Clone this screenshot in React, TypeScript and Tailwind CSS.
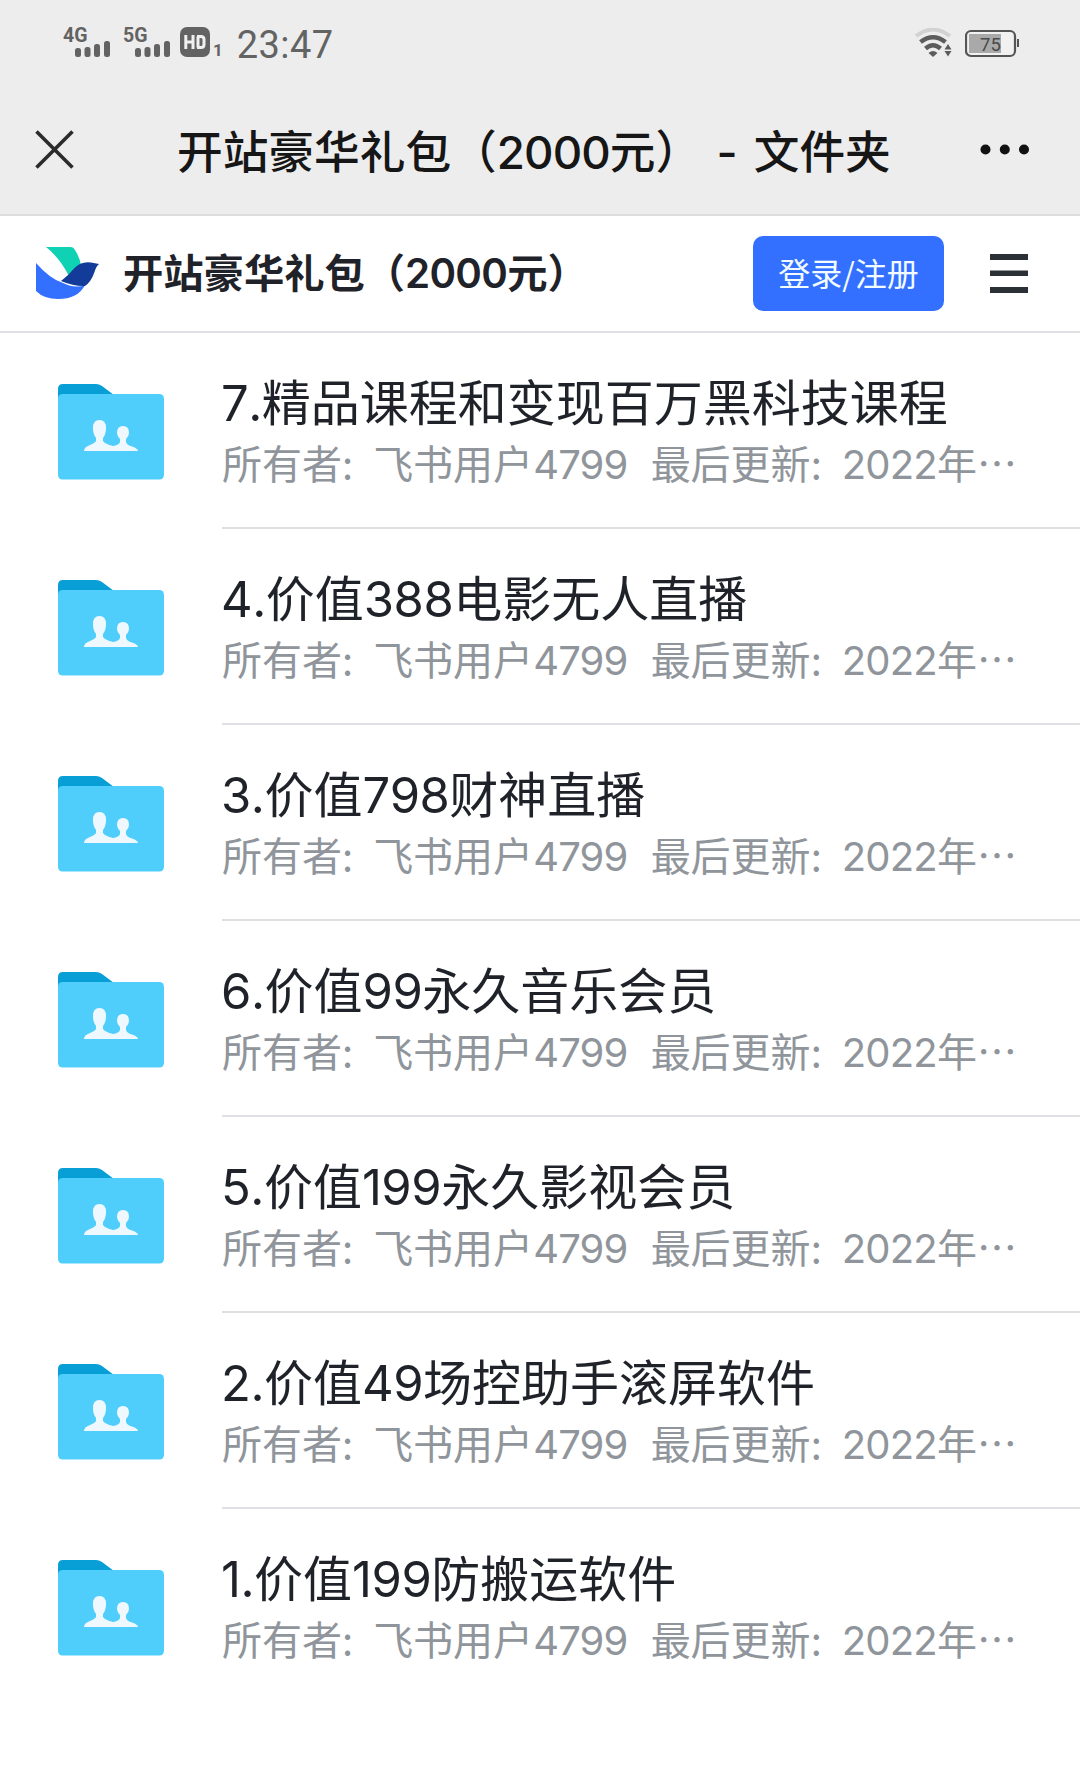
import { Fragment } from "react";

const FOLDERS: string[] = [
  "7.精品课程和变现百万黑科技课程",
  "4.价值388电影无人直播",
  "3.价值798财神直播",
  "6.价值99永久音乐会员",
  "5.价值199永久影视会员",
  "2.价值49场控助手滚屏软件",
  "1.价值199防搬运软件",
];

// digits use Inter, everything else stays on the CJK face
function Mixed({ text, digits }: { text: string; digits: string }) {
  return (
    <>
      {text.split(/([0-9.]+)/).map((part, i) =>
        i % 2 === 1 ? (
          <span key={i} className={digits}>
            {part}
          </span>
        ) : (
          <Fragment key={i}>{part}</Fragment>
        ),
      )}
    </>
  );
}

function Colon() {
  return <span className="mr-[20px]">:</span>;
}

function Signal({ label }: { label: string }) {
  return (
    <svg width="50" height="34" viewBox="0 0 50 34" fill="#636363">
      <text
        x="0"
        y="17.500"
        fontSize="20.500"
        fontWeight="700"
        textLength="24.500"
        lengthAdjust="spacingAndGlyphs"
        fontFamily="Roboto, sans-serif"
      >
        {label}
      </text>
      <rect x="12" y="24" width="6" height="9" rx="2.5" />
      <rect x="21.5" y="23" width="6" height="10" rx="2.5" />
      <rect x="31" y="20" width="6" height="13" rx="2.5" />
      <rect x="41" y="17" width="6" height="16" rx="2.5" />
    </svg>
  );
}

function StatusBar() {
  return (
    <div className="flex h-[88px] items-start pl-[63px] pr-[60px]">
      <div className="flex pt-6">
        <Signal label="4G" />
        <div className="w-2.5" />
        <Signal label="5G" />
      </div>
      <div className="ml-[7px] mt-[27px] flex h-[30px] w-[30px] items-center justify-center rounded-[7px] bg-[#636363]">
        <svg width="24" height="16" viewBox="0 0 24 16" fill="none" stroke="#f0f0f0" strokeWidth="3">
          <path d="M2.8 1v14M10 1v14M3 8h7M15 2.5v11M14 2.5h4q3 0 3 3v5q0 3-3 3h-4" />
        </svg>
      </div>
      <span className="ml-[3px] mt-[41px] font-[Roboto,sans-serif] text-[17px] leading-[18px] font-bold text-[#636363]">
        1
      </span>
      <span className="ml-[14px] mt-[25px] font-[Roboto,sans-serif] text-[38px] leading-10 tracking-[0.4px] text-[#636363]">
        23:47
      </span>
      <svg className="ml-auto mt-[28px]" width="38" height="30" viewBox="0 0 38 30" fill="none">
        <path d="M1 8q17-13 34 0" stroke="#d2d2d2" strokeWidth="4" />
        <path d="M5.5 14q12.500-9.500 25 0" stroke="#5c5c5c" strokeWidth="4.500" />
        <path d="M10.500 20.500q7.500-6.500 15 0" stroke="#5c5c5c" strokeWidth="4.500" />
        <path d="M13.500 25q4.500-4 9 0L18 29zM33 16l3.500 5.500h-7zM33 28.500l3.500-5.500h-7z" fill="#5c5c5c" />
      </svg>
      <svg className="ml-[12px] mt-[29px]" width="55" height="30" viewBox="0 0 55 30">
        <rect x="1" y="2" width="49" height="25" rx="5" fill="#f1f1f1" stroke="#555" strokeWidth="2.200" />
        <path d="M4 5h32v19H4z" fill="#a9a9a9" />
        <path d="M52 10h2v8h-2z" fill="#555" />
        <text x="15" y="21.500" fontSize="18.500" fontFamily="Roboto, sans-serif" fill="#4a4a4a">
          75
        </text>
      </svg>
    </div>
  );
}

function TitleBar() {
  return (
    <div className="flex h-[126px] items-start pl-[35px] pr-[50px]">
      <svg className="mt-[42px]" width="39" height="39" viewBox="0 0 39 39" stroke="#2b2b2b" strokeWidth="3.600">
        <path d="M1.500 1.500l36 36M37.500 1.500l-36 36" />
      </svg>
      <h1 className="ml-[103px] mt-[31px] whitespace-nowrap text-[45.7px] leading-[60px] font-medium text-[#161616]">
        <Mixed text="开站豪华礼包（2000元）" digits="font-[Inter,sans-serif] tracking-[-0.900px]" />
        <span className="ml-[3px] mr-[4px] font-[Inter,sans-serif]"> - </span>
        文件夹
      </h1>
      <svg className="ml-auto mt-[56px]" width="50" height="11" viewBox="0 0 50 11" fill="#111">
        <circle cx="5.500" cy="5.500" r="5" />
        <circle cx="24.800" cy="5.500" r="5" />
        <circle cx="44" cy="5.500" r="5" />
      </svg>
    </div>
  );
}

function FeishuLogo() {
  return (
    <svg width="63" height="52" viewBox="0 0 63 52">
      <path d="M10 0H35q2.500 0 4 3 5 8 6 15.500Q39 22 33 29 23 10 10 0z" fill="#0fd2b4" />
      <path d="M0 16Q14 32 27 36q12 6 22 2Q42 52 22 52 8 52 0 44z" fill="#3370ff" />
      <path d="M25 34Q32 29 38 21.500 45 14 55 15.500l8 1.500q-3 2.500-4.500 8Q55 35 49 39 38 39.500 25 34z" fill="#133c9a" />
    </svg>
  );
}

function DocHeader() {
  return (
    <div className="flex h-[117px] items-start border-b-2 border-[#dee0e3] pt-5 pl-9 pr-[52px]">
      <div className="mt-[11px]">
        <FeishuLogo />
      </div>
      <h2 className="ml-[24px] mt-[7px] whitespace-nowrap text-[40.3px] leading-[56px] font-bold text-[#1f2329]">
        <Mixed text="开站豪华礼包（2000元）" digits="font-[Inter,sans-serif] font-semibold tracking-[-0.700px]" />
      </h2>
      <button
        type="button"
        className="ml-auto h-[75px] w-[191px] rounded-[10px] bg-[#3370ff] pb-1 text-[32px] text-[#f2fbff]"
      >
        登录/注册
      </button>
      <svg className="ml-[46px] mt-[18px]" width="38" height="39" viewBox="0 0 38 39" fill="#2b2f36">
        <path d="M0 0h38v6H0zM0 16.500h38v5.500H0zM0 33h38v6H0z" />
      </svg>
    </div>
  );
}

function SharedFolderIcon() {
  return (
    <svg width="106" height="96" viewBox="0 0 106 96">
      <path d="M0 20V5q0-5 5-5h33q3 0 6 2l12 9v9z" fill="#089fd6" />
      <rect y="10" width="106" height="85.500" rx="4.500" fill="#50cefb" />
      <path
        d="M26 67q0-4 6-6 5-2 6-4v-3q-3-4-3-10 0-8 6.500-8t6.500 8q0 6-3 10v3q2 3 10 5 6-1 7-4v-3q-3-3-3-6 0-7 6-7t6 7q0 3-3 6v3q1 3 6 4.500 6 2 6 4.500z"
        fill="#f0f8ff"
      />
    </svg>
  );
}

function FolderRow({ name, last }: { name: string; last: boolean }) {
  return (
    <li className="flex h-[196px] pl-[58px]">
      <div className="mt-[51px]">
        <SharedFolderIcon />
      </div>
      <div className={`ml-[58px] flex-1 border-b-2 ${last ? "border-transparent" : "border-[#dee0e3]"}`}>
        <div className="-ml-px mt-[33px] whitespace-nowrap text-[49px] leading-[68px] text-[#1f2329] [font-kerning:none]">
          <Mixed text={name} digits="font-[Inter,sans-serif] tracking-[-0.500px]" />
        </div>
        <div className="-mt-[3px] whitespace-nowrap text-[40px] leading-[54px] text-[#8f959b]">
          所有者
          <Colon />
          <Mixed text="飞书用户4799" digits="font-[Inter,sans-serif] tracking-[-0.800px]" />
          <span className="ml-[23px]">最后更新</span>
          <Colon />
          <Mixed text="2022年…" digits="font-[Inter,sans-serif] tracking-[-0.800px]" />
        </div>
      </div>
    </li>
  );
}

export default function App() {
  return (
    <div className="h-[1778px] w-[1080px] overflow-hidden bg-white font-['Noto_Sans_CJK_SC',sans-serif]">
      <header className="border-b-2 border-[#dcdddd] bg-[#ededed]">
        <StatusBar />
        <TitleBar />
      </header>
      <DocHeader />
      <ul>
        {FOLDERS.map((name, i) => (
          <FolderRow key={name} name={name} last={i === FOLDERS.length - 1} />
        ))}
      </ul>
    </div>
  );
}
